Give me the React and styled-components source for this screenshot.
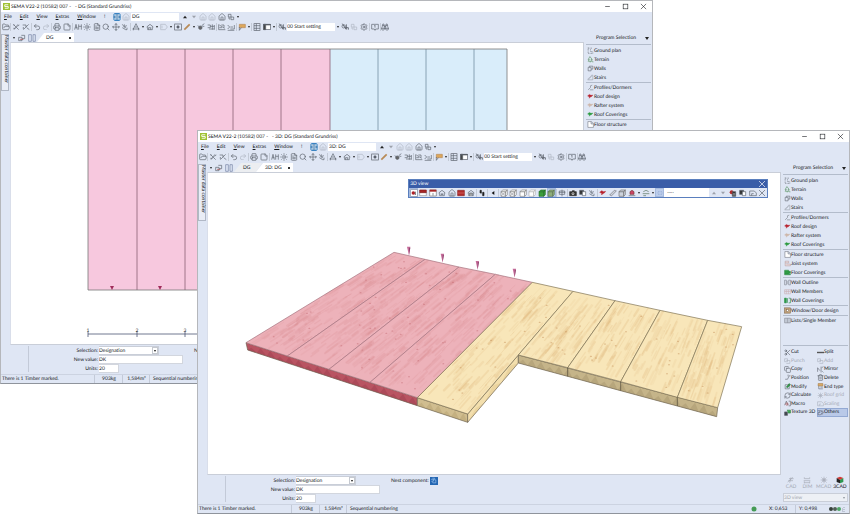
import React from 'react';
import styled, { createGlobalStyle, css } from 'styled-components';
import {
  FolderOpen, Undo2, Redo2, Printer, StickyNote, Sun, FileText, Search, Move, Settings,
  House, Binoculars, Scissors, Copy, Trash2, RefreshCw,
} from 'lucide-react';

const ink = '#5b606b';
const text = '#15171b';
const chrome = '#dfe6f4';
const line = '#b3bccb';

const Global = createGlobalStyle`
  *, *::before, *::after { box-sizing: border-box; }
  body { margin: 0; background: #fff; }
  body, button, input, select {
    font-family: Lato, "Open Sans", sans-serif;
    font-size: 5px;
    line-height: 8px;
    color: ${text};
    text-rendering: geometricPrecision;
  }
  button { border: 0; margin: 0; padding: 0; background: none; }
  input, select { border: 0; margin: 0; padding: 0; border-radius: 0; outline: 0; min-width: 0; appearance: none; }
  svg { display: block; flex: none; }
`;

const Desktop = styled.main`
  position: relative;
  min-height: 100vh;
  overflow: hidden;
  background: #fff;
`;

const WindowFrame = styled.section`
  position: absolute;
  display: flex;
  flex-direction: column;
  border: 1px solid #b5b7bb;
  border-bottom-color: #8f949c;
  background: ${chrome};
  overflow: hidden;
  ${(p) => (p.$front
    ? css`top: 130px; left: 197px; right: 0; bottom: 0;`
    : css`top: 0; left: 0; right: 197px; bottom: 130px;`)}
`;

const TitleBar = styled.header`
  display: flex;
  align-items: center;
  gap: 1px;
  height: 11px;
  flex: none;
  padding: 0 5px 0 2px;
  background: #fff;
`;

const Title = styled.h1`
  margin: 0;
  flex: 1;
  font-size: 5px;
  font-weight: 400;
  white-space: pre;
`;

const WindowButtons = styled.div`
  display: flex;
  gap: 10px;
`;

const WindowButton = styled.button`
  width: 8px;
  height: 8px;
  display: grid;
  place-items: center;
`;

const MenuBar = styled.nav`
  display: flex;
  align-items: center;
  height: 10px;
  flex: none;
  padding-left: 3px;
`;

const Menus = styled.div`
  display: flex;
  gap: 8px;
  width: 108px;
`;

const MenuButton = styled.button`
  &::first-letter { text-decoration: underline; }
`;

const ViewField = styled.input`
  width: 48px;
  height: 8px;
  padding-left: 1px;
  margin: 0 1px;
  background: #fff;
`;

const NavTools = styled.div`
  display: flex;
  justify-content: space-between;
  align-items: center;
  width: 60px;
`;

const ToolBar = styled.div`
  display: flex;
  justify-content: space-between;
  align-items: center;
  flex: none;
  height: 10px;
  width: 389px;
`;

const ToolButton = styled.button`
  display: grid;
  place-items: center;
  width: 9px;
  height: 9px;
  color: ${ink};
  opacity: ${(p) => (p.$dim ? 0.35 : 1)};
  ${(p) => p.$on && css`background: #bccdeb; box-shadow: inset 0 0 0 1px #a4b9de;`}
`;

const Rule = styled.span`
  width: 1px;
  height: 8px;
  background: #c3cad6;
`;

const Caret = styled.button`
  display: grid;
  place-items: center;
  width: 4px;
  height: 8px;
  &::after {
    content: '';
    border: 0 solid transparent;
    border-top-color: #222;
    border-width: ${(p) => (p.$large ? '3px 2px 0' : '2px 1px 0')};
  }
`;

const SettingField = styled.input`
  width: 48px;
  height: 8px;
  background: #fff;
`;

const Body = styled.div`
  display: flex;
  flex: 1;
  min-height: 0;
`;

const Work = styled.div`
  display: flex;
  flex-direction: column;
  flex: 1;
  min-width: 0;
`;

const TabRow = styled.div`
  display: flex;
  align-items: flex-end;
  flex: none;
  height: 10px;
  padding-left: 11px;
`;

const TabTools = styled.div`
  display: flex;
  align-items: center;
  gap: 1px;
  width: 25px;
  height: 9px;
`;

const Tab = styled.button`
  display: flex;
  align-items: center;
  justify-content: space-between;
  height: 9px;
  width: 28px;
  padding: 0 3px 0 9px;
  margin-right: -6px;
  background: #eceef1;
  clip-path: polygon(7px 0, 100% 0, 78% 100%, 0 100%);
  ${(p) => p.$active && css`
    width: 37px;
    background: #fff;
    clip-path: polygon(7px 0, 100% 0, 100% 100%, 0 100%);
  `}
`;

const Dot = styled.span`
  width: 2px;
  height: 2px;
  background: #333;
`;

const Stage = styled.div`
  display: flex;
  flex: 1;
  min-height: 0;
`;

const Drawer = styled.aside`
  width: 9px;
  flex: none;
`;

const DrawerTab = styled.button`
  display: flex;
  align-items: center;
  width: 8px;
  height: 57px;
  margin-top: -8px;
  writing-mode: vertical-rl;
  line-height: 7px;
  background: #e9edf6;
  border: 1px solid #b1b8c6;
`;

const Canvas = styled.div`
  position: relative;
  flex: 1;
  min-width: 0;
  background: #fff;
  border: 1px solid #c9ced8;
  border-left-color: #d9deea;
  & > svg { width: 100%; height: 100%; }
`;

const FormArea = styled.form`
  display: flex;
  flex: none;
  height: 29px;
  padding-top: 1px;
`;

const FormEdge = styled.div`
  width: 28px;
  height: 26px;
  border-right: 1px solid #c3cad8;
`;

const Fields = styled.div`
  display: grid;
  grid-template-columns: 70px 87px;
  grid-auto-rows: 9px;
  align-items: center;
`;

const Label = styled.label`
  text-align: right;
  padding-right: 1px;
`;

const Field = styled.input`
  width: ${(p) => p.$width};
  height: 9px;
  background: #fff;
  border: 1px solid #d2d6de;
  border-left: 0;
`;

const SelectBox = styled.div`
  display: flex;
  align-items: center;
  height: 9px;
  width: ${(p) => p.$width};
  border: 1px solid #c9ced8;
  border-left-width: ${(p) => (p.$muted ? '1px' : '0')};
  background: ${(p) => (p.$muted ? '#edf0f5' : '#fff')};
  & select {
    flex: 1;
    height: 7px;
    background: transparent;
    color: ${(p) => (p.$muted ? '#a1a5ae' : 'inherit')};
    opacity: 1;
  }
`;

const SelectArrow = styled.span`
  display: grid;
  place-items: center;
  width: 6px;
  height: 7px;
  ${(p) => !p.$muted && css`box-shadow: inset 0 0 0 1px #c5c9d0;`}
  &::after {
    content: '';
    border: 1px solid transparent;
    border-top: 2px solid ${(p) => (p.$muted ? '#8d929c' : '#111')};
    border-bottom: 0;
  }
`;

const Next = styled.label`
  display: flex;
  align-items: center;
  gap: 1px;
  height: 9px;
  margin-left: 8px;
`;

const NextButton = styled.button`
  display: grid;
  place-items: center;
  width: 8px;
  height: 8px;
  background: #2467b3;
  color: #a9cdf5;
`;

const StatusBar = styled.footer`
  display: flex;
  align-items: center;
  flex: none;
  height: 9px;
  padding-right: 4px;
  border-top: 1px solid #ccd3e1;
`;

const StatusCell = styled.span`
  width: ${(p) => p.$width || 'auto'};
  padding-left: ${(p) => (p.$pad ? '3px' : '1px')};
  text-align: ${(p) => (p.$center ? 'center' : 'left')};
  border-right: ${(p) => (p.$bare ? '0' : '1px solid #c3cad8')};
  white-space: nowrap;
  ${(p) => p.$grow && css`flex: 1;`}
`;

const Side = styled.aside`
  display: flex;
  flex-direction: column;
  flex: none;
  width: 68px;
  padding: 0 1px 0 2px;
  & > hr { width: 100%; height: 1px; flex: none; border: 0; margin: 0; background: ${line}; }
`;

const SideHead = styled.div`
  display: flex;
  align-items: center;
  justify-content: space-between;
  flex: none;
  height: 12px;
  padding: 0 2px 0 10px;
`;

const SideSpacer = styled.div`
  flex: ${(p) => p.$grow};
`;

const Entry = styled.button`
  display: flex;
  align-items: center;
  flex: none;
  height: ${(p) => (p.$compact ? 'auto' : '9px')};
  padding-left: ${(p) => (p.$compact ? '0' : '1px')};
  white-space: nowrap;
  text-align: left;
  color: ${(p) => (p.$dim ? '#a4a9b4' : text)};
  ${(p) => p.$on && css`background: #b9c9e8; box-shadow: inset 0 0 0 1px #93a9d3;`}
  & svg { color: ${ink}; opacity: ${(p) => (p.$dim ? 0.4 : 1)}; }
`;

const Commands = styled.div`
  display: grid;
  grid-template-columns: 33px 1fr;
  grid-template-rows: repeat(8, 1fr);
  height: 71px;
  padding: 2px 0 0 1px;
`;

const Modes = styled.div`
  display: grid;
  grid-template-columns: repeat(4, 1fr);
  padding-bottom: 2px;
`;

const Mode = styled.button`
  display: grid;
  justify-items: center;
  line-height: 7px;
  color: ${(p) => (p.$active ? text : '#a4a9b4')};
`;

const Palette = styled.div`
  position: absolute;
  top: 6px;
  left: 35%;
  right: 12px;
  border: 1px solid #5a7fbe;
  background: #fff;
`;

const PaletteTitle = styled.div`
  display: flex;
  align-items: center;
  justify-content: space-between;
  height: 8px;
  padding: 0 1px;
  color: #fff;
  background: #3a5da8;
  & button { color: #fff; }
`;

const PaletteBar = styled.div`
  display: flex;
  align-items: center;
  height: 9px;
  background: #fff;
`;

const PaletteTools = styled.div`
  display: flex;
  align-items: center;
  justify-content: space-between;
  height: 9px;
  width: ${(p) => p.$width};
  background: ${chrome};
`;

const PaletteGap = styled.span`
  flex: 1;
  padding-left: 3px;
`;

const roof = (fill) => <path d="M1 5 4 2.500 7 4 10 3.500 8 6 5.500 7 4 9V6.500Z" fill={fill} stroke={fill} strokeWidth=".6" />;
const cube = (a, b) => (
  <g stroke={b} strokeWidth=".9">
    <path d="M1.500 4h7v7h-7Z" fill={a} />
    <path d="m1.500 4 2.500-2.500h7L8.500 4ZM8.500 4 11 1.500v7L8.500 11Z" fill={a} />
  </g>
);
const house = (extra) => <g><path d="M1 6 6 2l5 4M2.500 5.500V10h7V5.500" />{extra}</g>;

const drawn = {
  logo: <g stroke="none"><rect width="12" height="12" fill="#9fc131" /><path d="M3 3h6M3 3v3h6v3H3" stroke="#fff" strokeWidth="1.500" /></g>,
  sync: <g><rect x="1.500" y="1" width="9" height="10" rx="1" stroke="#1970b8" fill="#fff" strokeWidth="1.500" /><path d="M1 6h10M3.500 3h5M3.500 9h5" stroke="#145c9c" strokeWidth="1.500" /></g>,
  cutA: <path d="m2 2 8 8M9 2 3 10M2 8h3M8 5l3-2M2 3h2" />,
  cutB: <path d="M2 10 10 2M1 3h5v3M7 7l4 3M2 6v3" />,
  text: <path d="M1 10 3 2l2 8M2 7h3M7 2v8M7 5h4M11 2v8" />,
  snap: <path d="M2 2l3 4M5 2v5M8 3 6 8M2 7l5 3M9 7v3h-2" />,
  angle: <path d="M2 9 6 1l4 8M1 9h10M4 6h4M2 8v3M10 8v3" />,
  roofs: house(<path d="M4 10V7h3v3" />),
  tag: <path d="M1 2h7l3 4-3 4H1ZM3 4v4" />,
  target: <g><rect x="1" y="1.500" width="10" height="9" /><circle cx="6" cy="6" r="1.800" fill="currentColor" /></g>,
  pencil: <path d="M2 10 10 2" stroke="#b88a56" strokeWidth="2.600" />,
  bug: <g><circle cx="5" cy="7" r="2.600" fill="#666" /><path d="M7 4 11 1M8 5h3M1 4l3 2" /></g>,
  dims: <path d="M1 3h4v4H1M5 5h6M8 2v8M3 9h8M11 3v7" />,
  slope: <path d="M1 2v8h10M2 3l8 5M5 3h4v4M2 7h4" />,
  edges: <path d="M1 3l3 3-3 3M5 9h6V3M5 6h4M1 11h10" />,
  note: <g><path d="M2 2h9v5H2Z" fill="#dda75b" stroke="#b88a56" /><path d="M2 6v5l3-4" /></g>,
  sheet: <g><rect x="1.500" y="1" width="9" height="10" /><path d="M1.500 4h9M1.500 8h9M5 1v10" /></g>,
  panel: <g><rect x="1" y="2" width="10" height="8" fill="#fff" /><path d="M1 2h3v8H1ZM1 2h10v1H1Z" fill="#444" /></g>,
  eyes: <g><circle cx="4" cy="5" r="2.500" /><path d="M2 1l6 9M8 2v7M6 7h5v3" strokeWidth="1.300" /></g>,
  board: <path d="M1 2h10v7H7l-1 2-1-2H1ZM6 3v4M5 4h1" />,
  tree: <g stroke="#4c8a55"><path d="M5 1 2 6h2L2 9h7L7 6h2Z" /><path d="M5.500 9v2M9 10h2" /></g>,
  plan: <path d="M2 1v10M2 2h7M6 4v4h4v3H2" strokeDasharray="1.500 1" />,
  walls: <path d="M2 4h5v6H2ZM4 4V2h6v5H7" />,
  stairs: <path d="M1 10h9V2H8v2H6v2H4v2H2v2" stroke="#9a9fa8" />,
  profile: <path d="M2 10 6 6V3l3-1M5 10h6" stroke="#737881" />,
  roofRed: roof('#b8202c'), roofPale: roof('#cdb6a8'), roofGreen: roof('#289a3c'),
  page: <path d="M1.500 1h6L11 4.500V11H1.500ZM7 1v4h4" fill="#fff" stroke="#70757f" />,
  joist: <path d="M2 2h6v3H2ZM2 5v5h9V7H4" stroke="#b99da0" fill="#eee0df" />,
  floorG: <path d="M1 2h7v2h3v3H8v1h3v2H1ZM1 5h8M1 8h8" fill="#34a34a" stroke="#187a30" strokeWidth=".7" />,
  outline: <path d="M1 2h3v8H1ZM5.500 3v6M8 2h3v8H8Z" stroke="#7b8089" />,
  members: <path d="M1 3h10v7H1ZM4 3v7M7.500 3v7M1 6h10" stroke="#c9adb2" />,
  cover: <g stroke="#188238"><path d="M1 2h3v8H1Z" fill="#31a34a" /><path d="M6 2v8M8 2h3v8H8" /></g>,
  door: <g><rect x="1" y="1.500" width="10" height="9" fill="#c3a27d" stroke="#806746" /><rect x="4" y="4" width="4" height="4" fill="#fff" stroke="#806746" /></g>,
  list: <path d="M1 2h10v8H1ZM3.500 2v8M6 2v8M8.500 2v8" stroke="#7d828c" />,
  split: <path d="M0 6h12" stroke="#555" strokeWidth="2.400" />,
  punch: <path d="M1 3h5v5H1ZM4 6h6v5H4" />,
  mirror: <path d="M1 10V3l4 5M7 1v10M8 3l3-2M9 9l2 2" />,
  position: <path d="M2 9h4L9 3h2M7 1v3" />,
  modify: <g><path d="M2 3h7v7H2Z" /><path d="m4 7 5-6 2 2-5 5Z" fill="#36964b" stroke="#287a3a" /></g>,
  endtype: <g><path d="M2 1h8v4H2Z" fill="#dcae6b" stroke="#a5783e" /><path d="M3 5v5h7M6 7h4" /></g>,
  macro: <g><path d="M1 9 4 2l3 7M8 2h3v8H8" /><circle cx="5" cy="7" r="2" stroke="#a44" /></g>,
  texture: <g><path d="M1 5h5v6H1Z" fill="#43484f" /><path d="M5 2h6v5H7" fill="#43a957" stroke="#287a3a" /></g>,
  others: <path d="M1 3h4v3H2v4h4M6 2l3 4-3 4M8 2l3 4-3 4" />,
  red: <g><path d="M1 5h10v5H1Z" fill="#fff" stroke="#777" strokeWidth=".8" /><path d="M1 1.500h10v4H1Z" fill="#a72525" stroke="#832020" /></g>,
  redNum: <g><path d="M1 1.500h10v9H1Z" fill="#fff" stroke="#777" /><path d="M1 2.500h10" stroke="#a72525" strokeWidth="3" /><path d="M6 6v4" /></g>,
  bricks: <g><path d="M1 2h10v8H1Z" fill="#b32b2b" stroke="#8c2020" /><path d="M1 6h10" stroke="#dc8484" strokeWidth=".8" /></g>,
  start: <g><rect x="1" y="1" width="10" height="10" fill="#fff" stroke="#8b94a3" /><circle cx="5" cy="6" r="2.600" fill="#b02127" stroke="none" /><path d="M8 4v5" stroke="#222" /></g>,
  houseDot: house(<path d="M4 8h4M6 6v3" />), houseFill: house(<path d="M4 10V6h4v4" fill="#aaa" />),
  steps: <g><path d="M3 2h2v4H3ZM7 5h2v5H7Z" fill="#222" stroke="#222" /><path d="M5 7h2" /></g>,
  back: <path d="M8 3v6L4 6Z" fill="#111" stroke="none" />,
  cubeX: <g>{cube('#fff', '#777')}<path d="m2 5 6 5M8 5l-6 5" strokeWidth=".7" /></g>,
  cubeW: cube('#fff', '#777'), cubeP: cube('#fff', '#aaa'), cubeG: cube('#3c9f3c', '#216c28'), cubeM: cube('#8fae7a', '#5b7251'),
  cubeL: cube('#cdd3dd', '#666'),
  section: <path d="M2 3h8v5H2ZM6 1v10M1 5h10" />,
  shot: <g><path d="M1 4h3l1-1.500h3L9 4h2v6H1Z" fill="#333" stroke="#333" /><circle cx="6" cy="7" r="1.500" stroke="#fff" /></g>,
  pipe: <path d="M1 9 8 2l3 1-7 7Z" fill="#cfd4dc" stroke="#727780" />,
  lamp: <g><path d="M3 8V4l3-2 3 2v4Z" fill="#c46" stroke="#733" /><path d="M1 10h10" /></g>,
  mist: <g><path d="m2 4 4-2 4 2M1 7h10M2 10h4" stroke="#55715b" /></g>,
  area: <path d="M3 4h6v4H3Z" strokeDasharray="1 1.500" stroke="#7693c7" />,
  redDoc: <g><circle cx="4" cy="5" r="3" fill="#b32b2b" stroke="none" /><path d="M5 4h5v7H5Z" fill="#333" /><path d="M7.500 6v4" stroke="#fff" /></g>,
  darkDoc: <g><path d="M1 2h6v6H1Z" fill="#333" /><path d="M5 4h5v6H5Z" fill="#fff" /></g>,
  card: <path d="M1 3h7l3 3v4H1ZM4 10V7h3" />,
  close: <path d="m1.500 1.500 9 9M10.500 1.500l-9 9" />,
  min: <path d="M2 6h8" />,
  max: <rect x="2" y="2" width="8" height="8" />,
  up: <path d="M3 8 6 4l3 4Z" fill="#222" stroke="none" />,
  down: <path d="M3 4l3 4 3-4Z" fill="#222" stroke="none" />,
  layers: <g><path d="M1 5h5v5H1ZM5 2h5v5H6" /><path d="M3 8h5" stroke="#a44" /></g>,
  split2: <path d="M1 1h4v10H1ZM7.500 1h3.500v10H7.500Z" stroke="#7181a1" />,
  link: <path d="M2 2h4v4H2ZM6 6h4v4H6ZM5 9H3V6" />,
  hand: <path d="M2 4h5M4 2h4v3h2v5H5L3 7h3V4" />,
  dimMode: <path d="M2 2v2h8V2M1 7h10M2 10h8M2 8v3M10 8v3" />,
  cadMode: <path d="M1 9 9 2M3 4h7M4 10l2-8M2 7h7" />,
  mcad: <g><circle cx="6" cy="6" r="2" /><path d="M6 1v10M1 6h10M2 2l8 8M10 2l-8 8" strokeWidth=".8" /></g>,
  cad3: <g stroke="none"><path d="m6 1 5 2-5 3-5-3Z" fill="#d33b35" /><path d="m1 3 5 3v5L1 9Z" fill="#222" /><path d="m11 3-5 3v5l5-2Z" fill="#2c9650" /></g>,
};

const packaged = {
  folder: FolderOpen, undo: Undo2, redo: Redo2, print: Printer, sticky: StickyNote, sun: Sun, doc: FileText,
  search: Search, move: Move, gear: Settings, home: House, find: Binoculars, scissors: Scissors,
  copy: Copy, trash: Trash2, cycle: RefreshCw,
};

function Icon({ name, size = 8 }) {
  const Pack = packaged[name];
  if (Pack) return <Pack size={size} strokeWidth={2} aria-hidden="true" />;
  return (
    <svg width={size} height={size} viewBox="0 0 12 12" fill="none" stroke="currentColor" strokeWidth="1" aria-hidden="true">
      {drawn[name]}
    </svg>
  );
}

function Tools({ items }) {
  return items.map((item, i) => {
    if (item === '|') return <Rule key={i} />;
    if (item === 'v') return <Caret key={i} type="button" aria-label="More" />;
    if (React.isValidElement(item)) return React.cloneElement(item, { key: i });
    const dim = item.startsWith('~');
    const on = item.startsWith('*');
    const name = dim || on ? item.slice(1) : item;
    return <ToolButton key={i} type="button" aria-label={name} $dim={dim} $on={on}><Icon name={name} /></ToolButton>;
  });
}

const mainTools = [
  'folder', '|', 'cutA', 'cutB', '|', 'undo', '~redo', '|', 'print', 'sticky', '|', 'text', 'sun', 'doc', 'search',
  'move', 'snap', '|', 'angle', 'v', 'roofs', 'v', '~tag', 'v', 'target', 'pencil', 'v', 'bug', 'dims', '|', 'slope', 'edges', '|',
  'note', 'v', '|', 'sheet', 'panel', 'v', '|', 'eyes', <SettingField aria-label="Setting" defaultValue="00 Start setting" />,
  'v', 'eyes', '~link', 'gear', '|', 'board', '|', 'find',
];

const paletteTools = [
  '*start', 'red', 'redNum', 'houseDot', 'home', 'bricks', 'houseFill', '|', 'steps', '|', 'back', '|', 'cubeX', 'cubeX',
  'cubeW', 'cubeP', 'cubeG', '*cubeM', '|', 'section', '|', 'shot', 'darkDoc', 'snap', '|', 'roofRed', 'pipe', 'cubeL',
  'lamp', 'v', 'mist', 'v', '*area',
];

const programs = [
  [['plan', 'Ground plan'], ['tree', 'Terrain'], ['walls', 'Walls'], ['stairs', 'Stairs']],
  [['profile', 'Profiles/Dormers'], ['roofRed', 'Roof design'], ['roofPale', 'Rafter system'], ['roofGreen', 'Roof Coverings']],
  [['page', 'Floor structure'], ['joist', 'Joist system'], ['floorG', 'Floor Coverings']],
  [['outline', 'Wall Outline'], ['members', 'Wall Members'], ['cover', 'Wall Coverings']],
  [['door', 'Window/Door design']],
  [['list', 'Lists/Single Member']],
];

const commands = [
  ['scissors', 'Cut'], ['split', 'Split'], ['punch', 'Punch', true], ['punch', 'Add', true],
  ['copy', 'Copy'], ['mirror', 'Mirror'], ['position', 'Position'], ['trash', 'Delete'],
  ['modify', 'Modify'], ['endtype', 'End type'], ['cycle', 'Calculate'], ['mcad', 'Roof grid', true],
  ['macro', 'Macro'], ['card', 'Scaling', true], ['texture', 'Texture 3D'], ['others', 'Others', false, true],
];

function FloorPlan() {
  const seams = [137, 185, 233, 281, 330, 378, 426, 474];
  return (
    <svg viewBox="11 43 572 301" role="img" aria-label="Floor plan">
      <path d="M88 49h242v241H88Z" fill="#f7c8de" />
      <path d="M330 49h177v241H330Z" fill="#d9edfa" />
      <g strokeWidth=".8" fill="none">
        {seams.map((x) => <path key={x} d={`M${x} 49v241`} stroke={x > 330 ? '#748fa2' : '#8c6075'} />)}
        <path d="M88 49h419v241H88Z" stroke="#777" />
      </g>
      {[112, 160, 209].map((x) => <path key={x} d={`M${x - 2} 286h4l-2 4Z`} fill="#a12d5b" />)}
      <g stroke="#4c5674" strokeWidth=".8"><path d="M88 334h419M88 331v6M137 331v6M185 331v6" /></g>
      <g fontSize="5" fill="#333" textAnchor="middle"><text x="88" y="332">1</text><text x="137" y="332">2</text><text x="185" y="332">3</text></g>
    </svg>
  );
}

const planks = [
  [[477, 52], [570, 73], [157, 363], [33, 323]],
  [[570, 73], [672, 96], [282, 403], [157, 363]],
  [[672, 96], [781, 118], [405, 442], [282, 403]],
  [[781, 118], [892, 142], [547, 488], [405, 442]],
  [[892, 142], [1014, 169], [698, 537], [547, 488]],
  [[1014, 169], [1140, 197], [998, 398], [850, 360]],
  [[1140, 197], [1275, 226], [1157, 440], [998, 398]],
  [[1275, 226], [1418, 256], [1327, 487], [1157, 440]],
  [[1418, 256], [1520, 275], [1448, 518], [1327, 487]],
];

const sides = [
  { fill: '#b95462', tint: '#a03f4f', quad: [[33, 323], [547, 488], [547, 512], [38, 345]], cuts: 18 },
  { fill: '#d0bd8f', tint: '#b7a373', quad: [[547, 488], [698, 537], [698, 562], [547, 512]], cuts: 6 },
  { fill: '#f3dfae', tint: '#e4c98f', quad: [[698, 537], [850, 360], [850, 384], [698, 562]], cuts: 3 },
  { fill: '#c5b489', tint: '#a99770', quad: [[850, 360], [1448, 518], [1445, 545], [850, 384]], cuts: 22 },
];

const pts = (list) => list.map((p) => p.join(',')).join(' ');

function at([a, b, c, d], u, v) {
  return [0, 1].map((k) => Math.round((a[k] * (1 - u) + b[k] * u) * (1 - v) + (d[k] * (1 - u) + c[k] * u) * v));
}

function makeGrain() {
  let seed = 41;
  const rand = () => {
    seed = (seed * 16807) % 2147483647;
    return seed / 2147483647;
  };
  return planks.map((q, i) => {
    const long = i < 5;
    const streaks = Array.from({ length: long ? 130 : 80 }, () => {
      const u = 0.04 + rand() * 0.92;
      const v = rand() * 0.9;
      const len = (long ? 0.03 : 0.06) + rand() * (long ? 0.09 : 0.16);
      return { a: at(q, u, v), b: at(q, u, Math.min(0.99, v + len)), w: 2 + rand() * 6, o: 0.04 + rand() * 0.16 };
    });
    const knots = Array.from({ length: long ? 14 : 9 }, () => at(q, 0.06 + rand() * 0.88, 0.03 + rand() * 0.94));
    return { streaks, knots };
  });
}
const grain = makeGrain();

function FloorModel() {
  return (
    <svg viewBox="-81 -186 1716 903" role="img" aria-label="3D floor model">
      {sides.map(({ fill, tint, quad, cuts }) => (
        <g key={fill}>
          <polygon points={pts(quad)} fill={fill} />
          {Array.from({ length: cuts }, (_, n) => (
            <polygon key={n} fill={tint} opacity=".5" points={pts([at(quad, n / cuts, 1), at(quad, (n + 0.5) / cuts, n % 3 ? 0.1 : 0.45), at(quad, (n + 1) / cuts, 1)])} />
          ))}
          <polygon points={pts(quad)} fill="none" stroke="#6c6250" strokeWidth="2" />
        </g>
      ))}
      {planks.map((q, i) => {
        const pink = i < 4;
        return (
          <g key={i}>
            <polygon points={pts(q)} fill={pink ? '#edb2ba' : '#f8e6b9'} />
            {grain[i].streaks.map((s, n) => (
              <path key={n} d={`M${s.a}L${s.b}`} stroke={pink ? '#d8868a' : '#dcae70'} strokeWidth={s.w} opacity={s.o + 0.04} strokeLinecap="round" />
            ))}
            {grain[i].knots.map((k, n) => (
              <ellipse key={n} cx={k[0]} cy={k[1]} rx="3" ry="1.500" fill={pink ? '#c0606a' : '#bd8149'} opacity=".55" />
            ))}
            <polygon points={pts(q)} fill="none" stroke={pink ? '#a3707c' : '#7a6e50'} strokeWidth="2" />
          </g>
        );
      })}
      <path d="M998 398v26M1157 440v27M1327 487v26" stroke="#4f4737" strokeWidth="2" />
      {[[521, 35], [622, 56], [727, 78], [838, 101]].map(([x, y]) => (
        <g key={x}>
          <path d={`M${x - 5} ${y}h10L${x + 1} ${y + 27}Z`} fill="#c66c9a" />
          <path d={`M${x + 1} ${y + 3}h4L${x + 1} ${y + 25}Z`} fill="#8d4470" />
        </g>
      ))}
    </svg>
  );
}

function ViewPalette() {
  return (
    <Palette>
      <PaletteTitle>
        3D view
        <WindowButton type="button" aria-label="Close 3D view"><Icon name="close" /></WindowButton>
      </PaletteTitle>
      <PaletteBar>
        <PaletteTools $width="255px"><Tools items={paletteTools} /></PaletteTools>
        <PaletteGap>·····</PaletteGap>
        <PaletteTools $width="58px"><Tools items={['~up', '~down', 'redDoc', 'darkDoc', 'card', 'close']} /></PaletteTools>
      </PaletteBar>
    </Palette>
  );
}

function SidePanel() {
  return (
    <Side>
      <SideHead>Program Selection<Caret type="button" $large aria-label="Choose program" /></SideHead>
      <hr />
      <SideSpacer $grow="0 0 1px" />
      {programs.map((group, g) => (
        <React.Fragment key={group[0][1]}>
          {g > 0 && <hr />}
          {group.map(([icon, name]) => <Entry key={name} type="button"><Icon name={icon} size={7} />{name}</Entry>)}
        </React.Fragment>
      ))}
      <SideSpacer $grow="20 0 0" />
      <hr />
      <Commands>
        {commands.map(([icon, name, dim, on]) => (
          <Entry key={name} type="button" $compact $dim={dim} $on={on} disabled={dim}><Icon name={icon} size={7} />{name}</Entry>
        ))}
      </Commands>
      <SideSpacer $grow="60 0 0" />
      <Modes>
        {[['cadMode', 'CAD'], ['dimMode', 'DIM'], ['mcad', 'MCAD'], ['cad3', '3CAD']].map(([icon, name]) => (
          <Mode key={name} type="button" $active={name === '3CAD'}><Icon name={icon} />{name}</Mode>
        ))}
      </Modes>
      <SelectBox $width="100%" $muted>
        <select aria-label="View" disabled><option>3D view</option></select>
        <SelectArrow $muted />
      </SelectBox>
      <SideSpacer $grow="0 0 2px" />
    </Side>
  );
}

function CadWindow({ id, view, tabs, front, children }) {
  return (
    <WindowFrame $front={front} aria-label={view}>
      <TitleBar>
        <Icon name="logo" size={7} />
        <Title>{`SEMA V22-2 (10582) 007 -   - ${view} (Standard Grundriss)`}</Title>
        <WindowButtons>
          {['min', 'max', 'close'].map((n) => <WindowButton key={n} type="button" aria-label={n}><Icon name={n} size={7} /></WindowButton>)}
        </WindowButtons>
      </TitleBar>
      <MenuBar>
        <Menus>
          {['File', 'Edit', 'View', 'Extras', 'Window', '!'].map((m) => <MenuButton key={m} type="button">{m}</MenuButton>)}
        </Menus>
        <Tools items={['sync', '~home']} />
        <ViewField aria-label="Current view" spellCheck="false" defaultValue={view} />
        <NavTools>
          <Tools items={['up', '~down', '~home', '~home', 'home', 'link', 'v']} />
        </NavTools>
      </MenuBar>
      <ToolBar><Tools items={mainTools} /></ToolBar>
      <Body>
        <Work>
          <TabRow>
            <TabTools><Caret type="button" aria-label="Tab list" /><Tools items={['layers', 'split2']} /></TabTools>
            {tabs.map((t) => (
              <Tab key={t} type="button" $active={t === view}>{t}{t === view && <Dot />}</Tab>
            ))}
          </TabRow>
          <Stage>
            <Drawer><DrawerTab type="button">Master data container</DrawerTab></Drawer>
            <Canvas>{children}</Canvas>
          </Stage>
          <FormArea>
            <FormEdge />
            <Fields>
              <Label htmlFor={`${id}-sel`}>Selection:</Label>
              <SelectBox $width="60px">
                <select id={`${id}-sel`}><option>Designation</option></select>
                <SelectArrow />
              </SelectBox>
              <Label htmlFor={`${id}-val`}>New value:</Label>
              <Field id={`${id}-val`} $width="84px" spellCheck="false" defaultValue="DK" />
              <Label htmlFor={`${id}-units`}>Units:</Label>
              <Field id={`${id}-units`} $width="20px" defaultValue="20" />
            </Fields>
            <Next>Nest component:<NextButton type="button" aria-label="Nest component"><Icon name="hand" size={7} /></NextButton></Next>
          </FormArea>
        </Work>
        <SidePanel />
      </Body>
      <StatusBar>
        <StatusCell $width="94px">There is 1 Timber marked.</StatusCell>
        <StatusCell $width="28px" $center>903kg</StatusCell>
        <StatusCell $width="27px" $center>1,584m³</StatusCell>
        <StatusCell $pad $grow $bare>Sequential numbering</StatusCell>
        <svg width="6" height="6" viewBox="0 0 6 6" aria-hidden="true"><circle cx="3" cy="3" r="2.500" fill="#459b55" /></svg>
        <StatusCell $bare $width="11px" />
        <StatusCell $width="28px">X: 0,653</StatusCell>
        <StatusCell $width="32px" $pad $bare>Y: 0,498</StatusCell>
        <svg width="17" height="6" viewBox="0 0 17 6" aria-hidden="true">
          <circle cx="3" cy="3" r="2" fill="#37413a" /><circle cx="7" cy="3" r="2" fill="#526057" /><circle cx="11" cy="3" r="2" fill="#4da465" />
          <path d="M16 1v1M14 3h1M16 3v1M14 5h1M16 5v1" stroke="#9ba3b3" />
        </svg>
      </StatusBar>
    </WindowFrame>
  );
}

export default function App() {
  return (
    <>
      <Global />
      <Desktop>
        <CadWindow id="plan" view="DG" tabs={['DG']}><FloorPlan /></CadWindow>
        <CadWindow id="model" view="3D: DG" tabs={['DG', '3D: DG']} front>
          <FloorModel />
          <ViewPalette />
        </CadWindow>
      </Desktop>
    </>
  );
}
